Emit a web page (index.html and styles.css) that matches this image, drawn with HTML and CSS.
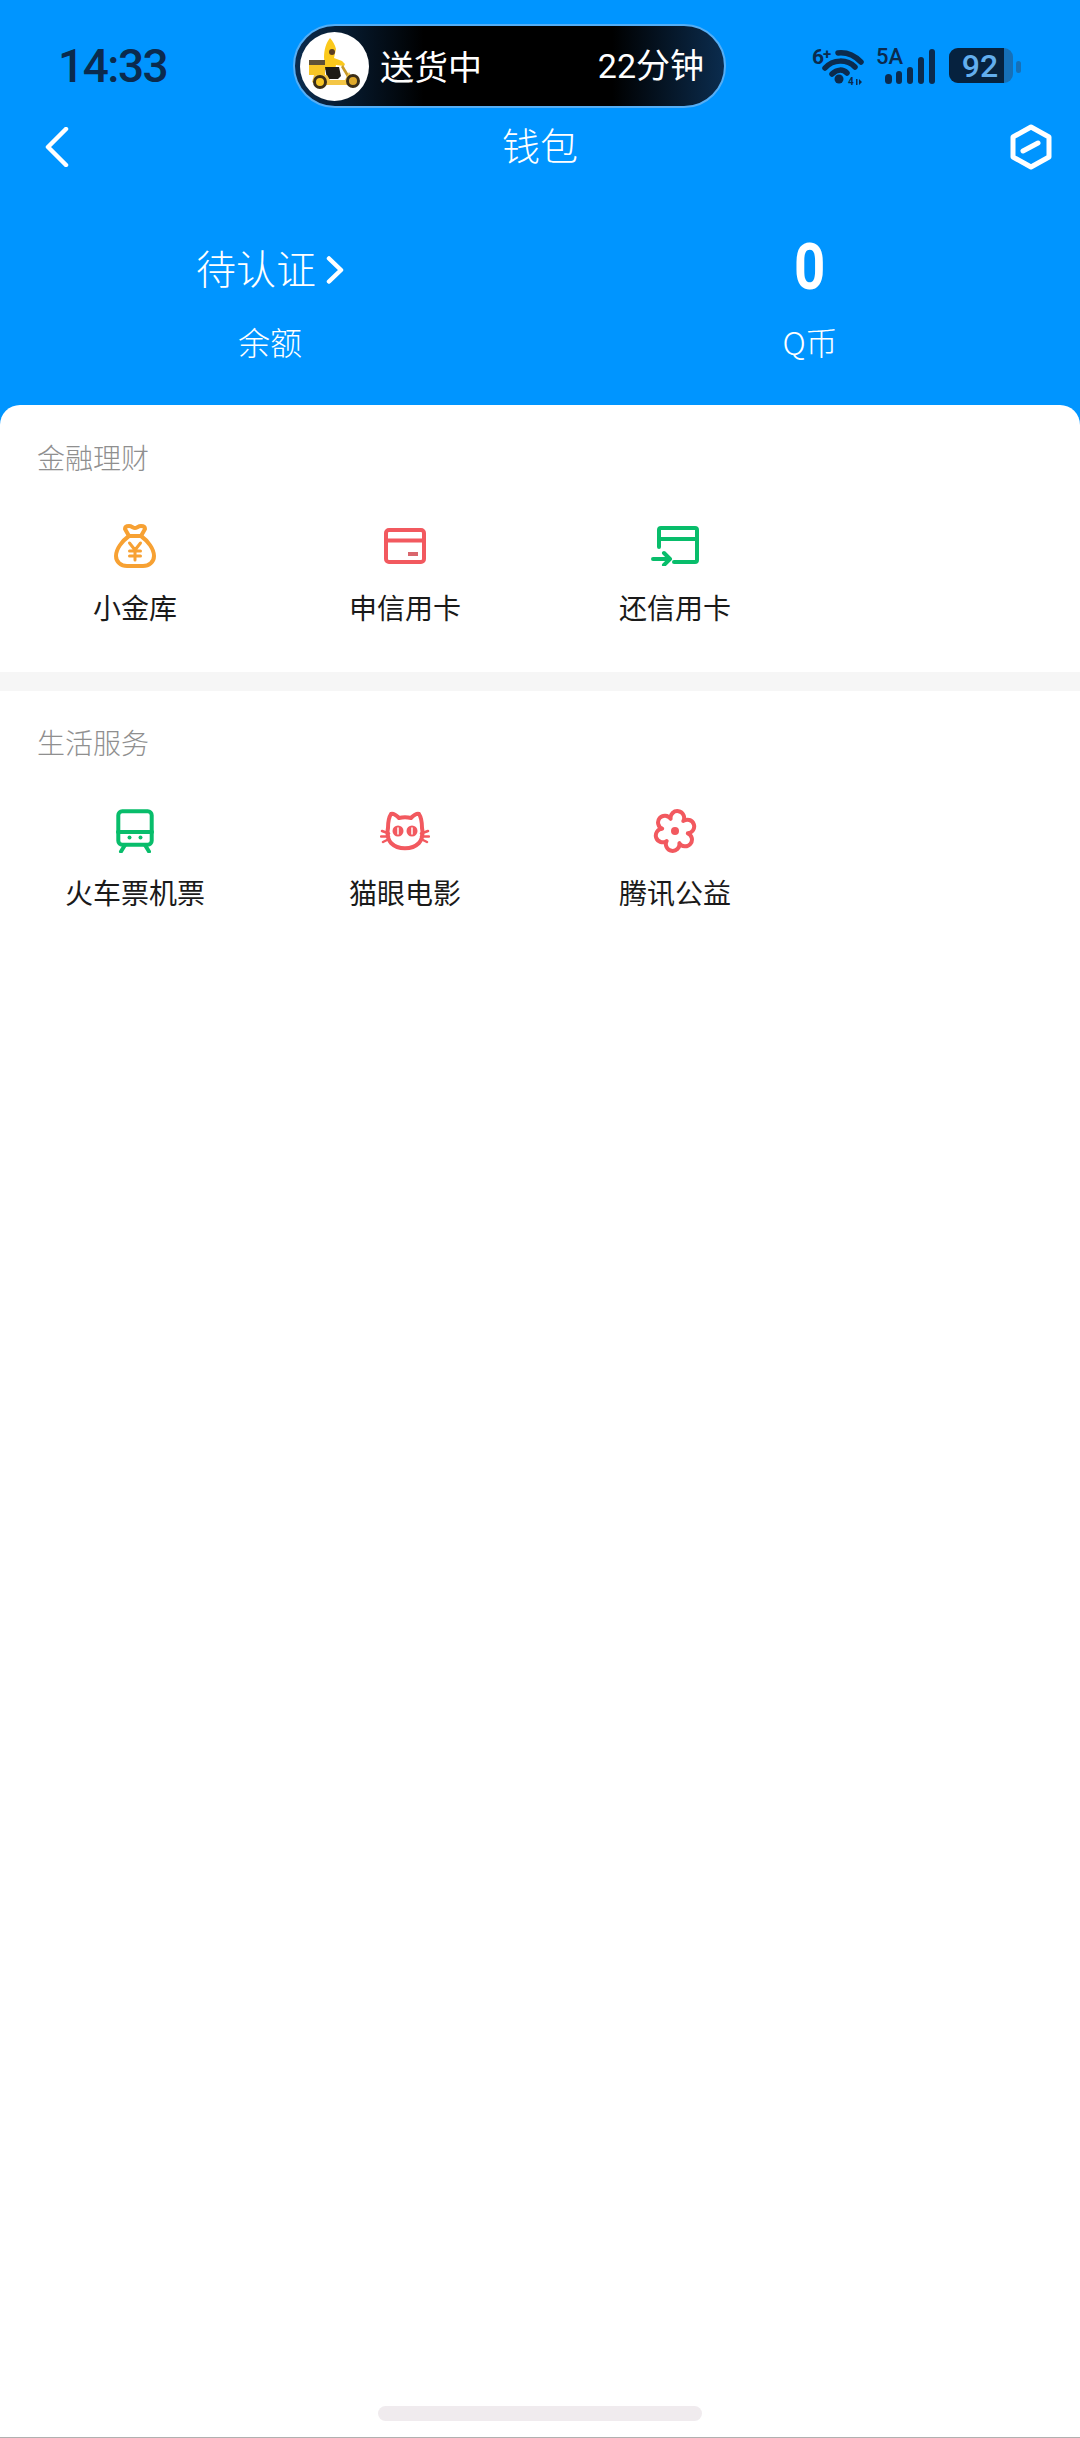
FILE: index.html
```html
<!DOCTYPE html>
<html lang="zh-CN">
<head>
<meta charset="utf-8">
<title>钱包</title>
<link rel="stylesheet" href="styles.css">
</head>
<body>
<div class="page">
  <header class="top">
    <div class="status">
      <span class="time">14:33</span>
      <div class="pill">
        <svg class="avatar" width="69" height="69" viewBox="0 0 69 69">
          <circle cx="34.500" cy="34.500" r="34.500" fill="#fff"/>
          <path d="M30 6c3 3 5 7 6 11l-2 9 8 3 3 3-1 2-8-1-1 5H25l-1-13c0-7 2-14 6-19z" fill="#fbc91c"/>
          <circle cx="32" cy="20" r="3" fill="#5a3d24"/>
          <path d="M43 33l9 15-2 2-9-15z" fill="#c89a2a"/>
          <path d="M25 35h14l2 9-3 3H27z" fill="#1d1b16"/>
          <path d="M14 43h13l3 5h15l4-8 5 9 2 4H17l-5-3z" fill="#f4c646"/>
          <rect x="9" y="28" width="16" height="15" fill="#f8c626"/>
          <rect x="9" y="28" width="16" height="5" fill="#5e5138"/>
          <circle cx="20" cy="50" r="5.500" fill="#f8c626" stroke="#3b2e18" stroke-width="3"/>
          <circle cx="53" cy="49" r="5.500" fill="#e0a92a" stroke="#3b2e18" stroke-width="3"/>
        </svg>
        <span class="pill-text">送货中</span>
        <span class="pill-text pill-end">22分钟</span>
      </div>
      <svg class="sys" width="220" height="40" viewBox="805 47 220 40">
        <text class="sys-a" x="812" y="65">6</text>
        <text class="sys-b" x="823" y="60">+</text>
        <g class="sys-arc">
          <path d="M838 54c9-1 17 3 23 9"/>
          <path d="M825 69c8-9 22-9 30-1"/>
          <path d="M832 75c5-5 11-5 15-1"/>
        </g>
        <circle class="sys-fill" cx="839" cy="80" r="4.500"/>
        <text class="sys-c" x="848" y="86">4</text>
        <path class="sys-fill" d="M856 80v6h1.500v-6zM859 80v6l3-3z"/>
        <text class="sys-d" x="876" y="65">5A</text>
        <g class="sys-fill">
          <rect x="885" y="75" width="7" height="10" rx="3.500"/>
          <rect x="896" y="72" width="6" height="13" rx="3"/>
          <rect x="907" y="68" width="6" height="17" rx="3"/>
          <rect x="918" y="58" width="6" height="27" rx="3"/>
          <rect x="929" y="50" width="6" height="35" rx="3"/>
        </g>
        <rect x="949" y="49" width="64" height="35" rx="9" class="batt-rest"/>
        <path class="batt" d="M958 49h46v35h-46a9 9 0 0 1-9-9V58a9 9 0 0 1 9-9z"/>
        <rect x="1016" y="62" width="5" height="12" rx="2.500" class="batt-rest"/>
        <text class="sys-e" x="980" y="78">92</text>
      </svg>
    </div>
    <nav class="nav">
      <svg class="back" width="24" height="40" viewBox="0 0 24 40"><path d="M21 2L3 20l18 18"/></svg>
      <h1 class="title">钱包</h1>
      <svg class="hex" width="42" height="46" viewBox="0 0 42 46"><path d="M21 3l18 10v20L21 43 3 33V13z"/><path d="M13 27l15-8"/></svg>
    </nav>
    <div class="balance">
      <div class="cell">
        <div class="value">
          <span class="value-text">待认证</span>
          <svg class="chev" width="18" height="28" viewBox="0 0 18 28"><path d="M3 2.500l12 11.500L3 25.500"/></svg>
        </div>
        <div class="sub">余额</div>
      </div>
      <div class="cell">
        <div class="value"><span class="value-num">0</span></div>
        <div class="sub">Q币</div>
      </div>
    </div>
  </header>
  <main class="card">
    <section class="block block-first">
      <h2 class="head">金融理财</h2>
      <div class="grid">
        <div class="item">
          <div class="ico">
            <svg width="42" height="44" viewBox="0 0 42 44" class="stroke orange">
              <path d="M15 12C8 17 2 25 2 32c0 6 5 10 11 10h16c6 0 11-4 11-10 0-7-6-15-13-20z"/>
              <path d="M15 12l-4-7c0-2 1-3 4-3 3 0 4 2 6 2s3-2 6-2c3 0 4 1 4 3l-4 7"/>
              <path class="thick" d="M15.500 19l5.500 7 5.500-7M21 26v10M15.500 27h11M15.500 32h11"/>
            </svg>
          </div>
          <span class="label">小金库</span>
        </div>
        <div class="item">
          <div class="ico">
            <svg width="42" height="36" viewBox="0 0 42 36" class="stroke red">
              <rect x="2" y="2" width="38" height="32" rx="3"/>
              <path d="M2 12.500h38"/>
              <path class="dash" d="M24 26h10"/>
            </svg>
          </div>
          <span class="label">申信用卡</span>
        </div>
        <div class="item">
          <div class="ico">
            <svg width="48" height="40" viewBox="0 0 48 40" class="stroke green">
              <path d="M8 21V4a2 2 0 0 1 2-2h34a2 2 0 0 1 2 2v30a2 2 0 0 1-2 2H23"/>
              <path d="M8 13h38"/>
              <path d="M2 33h17M13 27l6 6-6 6"/>
            </svg>
          </div>
          <span class="label">还信用卡</span>
        </div>
      </div>
    </section>
    <div class="band"></div>
    <section class="block">
      <h2 class="head">生活服务</h2>
      <div class="grid">
        <div class="item">
          <div class="ico">
            <svg width="38" height="44" viewBox="0 0 38 44" class="stroke green">
              <rect x="2.300" y="2.300" width="33.400" height="33.400" rx="4"/>
              <path d="M2 23h34"/>
              <path d="M9 36l-4 6.500M29 36l4 6.500"/>
              <circle class="dot" cx="13.500" cy="28.500" r="2"/>
              <circle class="dot" cx="24.500" cy="28.500" r="2"/>
            </svg>
          </div>
          <span class="label">火车票机票</span>
        </div>
        <div class="item">
          <div class="ico">
            <svg width="50" height="40" viewBox="0 0 50 40" class="stroke red">
              <path d="M11 3c3-1 6 2 8 4 4-1 8-1 12 0 2-2 5-5 8-4 2 3 3 9 3 14 1 5 1 10-3 15-7 7-21 7-28 0-4-5-4-10-3-15 0-5 1-11 3-14z"/>
              <circle class="dot" cx="18" cy="20" r="5.500"/>
              <circle class="dot" cx="32" cy="20" r="5.500"/>
              <path class="slit" d="M18 17v6M32 17v6"/>
              <path class="thin" d="M2 20l7 2.500M1 25.500h8M3 31l6-3M48 20l-7 2.500M49 25.500h-8M47 31l-6-3"/>
            </svg>
          </div>
          <span class="label">猫眼电影</span>
        </div>
        <div class="item">
          <div class="ico">
            <svg width="44" height="46" viewBox="0 0 44 46" class="stroke red">
              <g transform="translate(1 1)">
                <path d="M33.800 24.300A6.800 6.800 0 1 1 25.400 34.200A6.800 6.800 0 1 1 12.600 32A6.800 6.800 0 1 1 8.200 19.700A6.800 6.800 0 1 1 16.600 9.800A6.800 6.800 0 1 1 29.400 12A6.800 6.800 0 1 1 33.800 24.300Z"/>
                <circle class="dot" cx="21" cy="22" r="4"/>
              </g>
            </svg>
          </div>
          <span class="label">腾讯公益</span>
        </div>
      </div>
    </section>
    <div class="fill"></div>
    <div class="home"><span class="home-bar"></span></div>
  </main>
</div>
</body>
</html>
```
FILE: styles.css
```css
* { box-sizing: border-box; }
html, body { margin: 0; padding: 0; }
body {
  font-family: "Noto Sans CJK SC", "Noto Sans", sans-serif;
  background: #0095ff;
}
.page {
  width: 1080px;
  height: 2438px;
  display: flex;
  flex-direction: column;
  overflow: hidden;
}
.top { height: 405px; padding-top: 24px; color: #fff; flex: none; }

.status {
  display: flex;
  align-items: center;
  height: 84px;
  padding-left: 58px;
  padding-right: 55px;
}
.time {
  flex: 0 0 235px;
  font-family: Roboto, sans-serif;
  font-size: 46px;
  font-weight: 500;
  letter-spacing: -1.500px;
  color: #0b2b4e;
}
.pill {
  width: 433px;
  height: 84px;
  border: 2px solid #55aef5;
  border-radius: 42px;
  background: linear-gradient(90deg, #0b2c4e 0%, #000 30%, #000 74%, #0b2c4e 100%);
  display: flex;
  align-items: center;
  padding: 0 20px 0 5px;
}
.avatar { flex: none; margin-right: 11px; }
.pill-text { font-size: 34px; font-weight: 400; color: #fff; line-height: 1.2; }
.pill-end { margin-left: auto; font-family: Roboto, "Noto Sans CJK SC", sans-serif; }
.sys { margin-left: auto; flex: none; }
.sys-a, .sys-d, .sys-c, .sys-b, .sys-e { font-family: Roboto, sans-serif; font-weight: 700; }
.sys-a { font-size: 21px; fill: #0b2b4e; }
.sys-b { font-size: 15px; fill: #0b2b4e; }
.sys-c { font-size: 10px; fill: #0b2b4e; }
.sys-d { font-size: 22px; font-weight: 500; fill: #0b2b4e; }
.sys-e { font-size: 32px; font-weight: 500; fill: #62aeee; text-anchor: middle; }
.sys-fill { fill: #0b2b4e; }
.batt { fill: #06223f; }
.batt-rest { fill: #1670b8; }
.sys-arc path { fill: none; stroke: #0b2b4e; stroke-width: 5.500px; stroke-linecap: round; }

.nav {
  display: grid;
  grid-template-columns: 1fr auto 1fr;
  align-items: center;
  height: 78px;
  padding: 0 28px;
}
.back { justify-self: start; margin-left: 17px; }
.back path { fill: none; stroke: #fff; stroke-width: 4.500px; stroke-linecap: round; stroke-linejoin: round; }
.title { margin: 0 0 6px; font-size: 38px; font-weight: 300; line-height: 1.2; }
.hex { justify-self: end; }
.hex path { fill: none; stroke: #fff; stroke-width: 5px; stroke-linejoin: round; stroke-linecap: round; }

.balance {
  display: grid;
  grid-template-columns: 1fr 1fr;
  padding-top: 51px;
}
.cell { display: flex; flex-direction: column; align-items: center; gap: 22px; }
.value { height: 60px; display: flex; align-items: center; gap: 10px; }
.value-text { font-size: 40px; font-weight: 300; line-height: 60px; }
.value-num {
  display: inline-block;
  font-family: Roboto, sans-serif;
  font-size: 65px;
  font-weight: 700;
  line-height: 60px;
  transform: scaleX(0.84);
}
.chev { position: relative; top: 3px; }
.chev path { fill: none; stroke: #fff; stroke-width: 4.500px; stroke-linecap: round; stroke-linejoin: round; }
.sub { height: 44px; font-size: 32px; font-weight: 300; line-height: 44px; }

.card {
  flex: 1;
  display: flex;
  flex-direction: column;
  background: #fff;
  border-radius: 20px 20px 0 0;
}
.block { padding: 31px 0 43px; height: 267px; }
.block-first { padding-top: 32px; }
.head {
  margin: 0;
  padding-left: 37px;
  font-size: 28px;
  font-weight: 300;
  line-height: 40px;
  color: #8f8f8f;
}
.grid { display: grid; grid-template-columns: repeat(4, 270px); margin-top: 43px; }
.item { display: flex; flex-direction: column; align-items: center; gap: 15px; }
.ico { height: 52px; display: flex; align-items: center; justify-content: center; }
.label { font-size: 28px; font-weight: 400; line-height: 40px; color: #1a1a1a; }
.stroke { fill: none; stroke-width: 4px; stroke-linecap: round; stroke-linejoin: round; }
.orange { stroke: #f7a133; }
.red { stroke: #f2595f; }
.green { stroke: #08bd6b; }
.thin { stroke-width: 2.500px; }
.thick { stroke-width: 3px; }
.dash { stroke: #d9666d; stroke-linecap: butt; }
.dot { fill: currentColor; stroke: none; }
.orange .dot { color: #f7a133; }
.red .dot { color: #f2595f; }
.green .dot { color: #08bd6b; }
.slit { stroke: #fff; stroke-width: 1.500px; }
.band { height: 19px; background: #f6f6f6; flex: none; }
.fill { flex: 1; }
.home { height: 32px; border-bottom: 1px solid #b0b0b0; display: flex; justify-content: center; flex: none; }
.home-bar { width: 324px; height: 15px; border-radius: 8px; background: #f0ebee; }
```
